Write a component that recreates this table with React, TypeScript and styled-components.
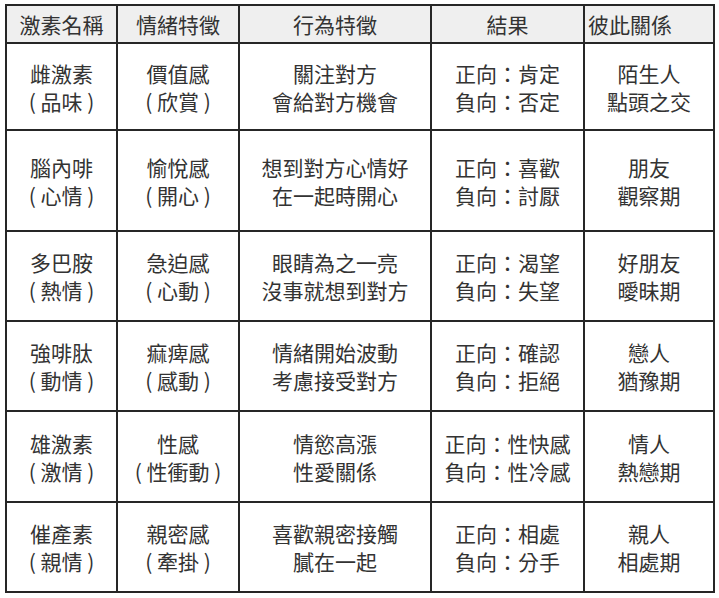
import React from 'react';
import styled, { createGlobalStyle } from 'styled-components';

const GlobalStyle = createGlobalStyle`
  html, body {
    margin: 0;
    padding: 0;
    background: #fff;
  }
  body {
    font-family: "Noto Sans CJK TC", "Noto Sans", sans-serif;
  }
`;

const Page = styled.div`
  padding: 4px 0 0 5px;
`;

const Table = styled.table`
  border-collapse: collapse;
  table-layout: fixed;
  width: 708px;
  color: #333;
  font-size: 21px;
  line-height: 28px;
`;

const HeadCell = styled.th<{ $align?: 'left' | 'center' }>`
  border: 2px solid #262626;
  background: #efefef;
  font-weight: 400;
  text-align: ${p => p.$align ?? 'center'};
  padding: 0 0 0 ${p => (p.$align === 'left' ? '3px' : '0')};
  white-space: nowrap;
`;

const Cell = styled.td`
  border: 2px solid #262626;
  text-align: center;
  vertical-align: middle;
  padding: 0;
  white-space: nowrap;
`;

const Row = styled.tr<{ $h: number }>`
  height: ${p => p.$h}px;
`;

const Line = styled.div`
  display: block;
`;

const widths = [111, 122, 192, 153, 130];

const rows = [
  { h: 87, cells: [['雌激素', '( 品味 )'], ['價值感', '( 欣賞 )'], ['關注對方', '會給對方機會'], ['正向：肯定', '負向：否定'], ['陌生人', '點頭之交']] },
  { h: 101, cells: [['腦內啡', '( 心情 )'], ['愉悅感', '( 開心 )'], ['想到對方心情好', '在一起時開心'], ['正向：喜歡', '負向：討厭'], ['朋友', '觀察期']] },
  { h: 90, cells: [['多巴胺', '( 熱情 )'], ['急迫感', '( 心動 )'], ['眼睛為之一亮', '沒事就想到對方'], ['正向：渴望', '負向：失望'], ['好朋友', '曖昧期']] },
  { h: 90, cells: [['強啡肽', '( 動情 )'], ['痲痺感', '( 感動 )'], ['情緒開始波動', '考慮接受對方'], ['正向：確認', '負向：拒絕'], ['戀人', '猶豫期']] },
  { h: 91, cells: [['雄激素', '( 激情 )'], ['性感', '( 性衝動 )'], ['情慾高漲', '性愛關係'], ['正向：性快感', '負向：性冷感'], ['情人', '熱戀期']] },
  { h: 90, cells: [['催產素', '( 親情 )'], ['親密感', '( 牽掛 )'], ['喜歡親密接觸', '膩在一起'], ['正向：相處', '負向：分手'], ['親人', '相處期']] },
];

export default function App() {
  return (
    <Page>
      <GlobalStyle />
      <Table>
        <colgroup>
          {widths.map((w, i) => (
            <col key={i} style={{ width: w }} />
          ))}
        </colgroup>
        <thead>
          <Row $h={38}>
            <HeadCell>激素名稱</HeadCell>
            <HeadCell>情緒特徵</HeadCell>
            <HeadCell>行為特徵</HeadCell>
            <HeadCell>結果</HeadCell>
            <HeadCell $align="left">彼此關係</HeadCell>
          </Row>
        </thead>
        <tbody>
          {rows.map((r, i) => (
            <Row key={i} $h={r.h}>
              {r.cells.map((c, j) => (
                <Cell key={j}>
                  {c.map((t, k) => (
                    <Line key={k}>{t}</Line>
                  ))}
                </Cell>
              ))}
            </Row>
          ))}
        </tbody>
      </Table>
    </Page>
  );
}
